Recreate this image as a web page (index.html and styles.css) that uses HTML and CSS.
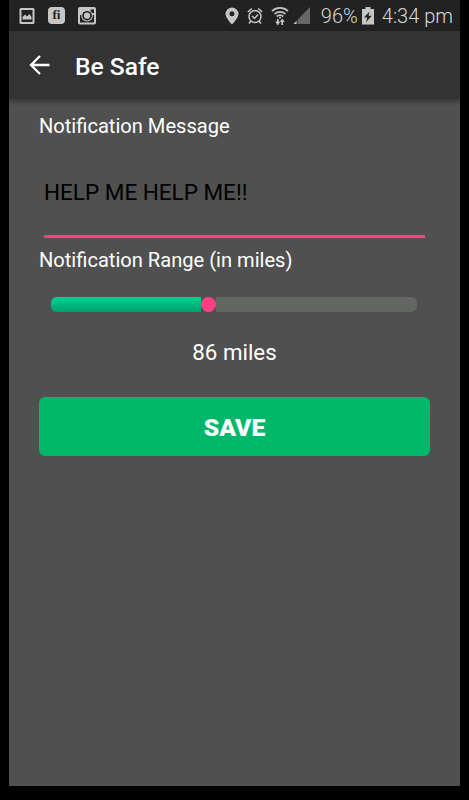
FILE: index.html
```html
<!DOCTYPE html>
<html lang="en">
<head>
    <meta charset="UTF-8">
    <meta name="viewport" content="width=device-width, initial-scale=1.0">
    <title>Be Safe</title>
    <link rel="stylesheet" href="styles.css">
</head>
<body>
    <div class="screen">
        <div class="status-bar">
            <div class="status-left">
                <svg width="16" height="18" viewBox="0 0 16 18">
                    <path fill="#c6c6c6" fill-rule="evenodd" d="M2 1h12a1.500 1.500 0 0 1 1.500 1.500v13A1.500 1.500 0 0 1 14 17H2A1.500 1.500 0 0 1 .5 15.500v-13A1.500 1.500 0 0 1 2 1zM2.500 3v12h11V3z"/>
                    <path fill="#c6c6c6" d="M3.500 12.500V10l2.500-2.500 2 2 2.500-2.500 2 3v2.500z"/>
                </svg>
                <span class="fi">fi</span>
                <svg width="18" height="18" viewBox="0 0 18 18">
                    <rect x="0" y="0" width="18" height="17.500" rx="2" fill="#c6c6c6"/>
                    <path fill="#222" d="M12.500 2.500H16V6h-3.500zM2 8h2.500v4.500h9V8H16v7.500H2z"/>
                    <circle cx="9" cy="8.700" r="5.800" fill="#c6c6c6"/>
                    <circle cx="9" cy="8.700" r="4.800" fill="#222"/>
                    <circle cx="9" cy="8.700" r="3.100" fill="#c6c6c6"/>
                </svg>
            </div>
            <div class="status-right">
                <svg class="pin" width="14" height="18" viewBox="0 0 14 18">
                    <path fill="#c6c6c6" fill-rule="evenodd" d="M7 .5a6.500 6.500 0 0 1 6.500 6.500C13.500 11 7 17.500 7 17.500S.5 11 .5 7A6.500 6.500 0 0 1 7 .5zM7 4.300a2.500 2.500 0 1 0 0 5 2.500 2.500 0 0 0 0-5z"/>
                </svg>
                <svg class="alarm" width="16" height="18" viewBox="0 0 16 18" fill="none" stroke="#c6c6c6" stroke-width="1.500">
                    <circle cx="8" cy="9.500" r="6"/>
                    <path d="M5 9l2.500 2.500L11 7.500M.8 5L4.800 1.500M15.200 5l-4-3.500M3.800 14l-1.800 2.500M12.200 14l1.800 2.500"/>
                </svg>
                <svg class="wifi" width="18" height="20" viewBox="0 0 18 20">
                    <g fill="none" stroke="#c6c6c6" stroke-width="1.700">
                        <path d="M1 5.200a11.500 11.500 0 0 1 16 0M3.500 8a8 8 0 0 1 11 0M5.800 10.500a4.800 4.800 0 0 1 6.400 0"/>
                        <path d="M6.800 13v4M11.200 19v-4"/>
                    </g>
                    <path fill="#c6c6c6" d="M4.300 15.500h5L6.800 19.500zM8.800 16h5L11.200 12.500zM9 10.500l1.200 1.200L9 13l-1.200-1.300z"/>
                </svg>
                <svg class="signal" width="17" height="18" viewBox="0 0 17 18">
                    <path fill="#666" d="M17 0v17H.5z"/>
                    <path fill="#222" d="M4.500 12v5H3.500v-4z"/>
                    <path fill="#c6c6c6" d="M3.500 14v3H.5z"/>
                </svg>
                <span class="percent">96%</span>
                <svg class="battery" width="12" height="18" viewBox="0 0 12 18">
                    <path fill="#c6c6c6" d="M3.500 0h5v2H12v15.500H0V2h3.500z"/>
                    <path fill="#222" d="M7.500 4.500L2 10.500h3.300L4 15.300l5.800-6.600H6.500z"/>
                </svg>
                <span class="time">4:34 pm</span>
            </div>
        </div>
        <header class="app-bar">
            <svg width="21" height="20" viewBox="0 0 21 20" fill="none" stroke="#fff" stroke-width="2.300">
                <path d="M20.500 10H2M11 1L2 10l9 9"/>
            </svg>
            <h1>Be Safe</h1>
        </header>
        <main class="content">
            <label class="label">Notification Message</label>
            <div class="message">HELP ME HELP ME!!</div>
            <label class="label range-label">Notification Range (in miles)</label>
            <div class="slider">
                <div class="slider-fill"></div>
                <div class="slider-gap">
                    <div class="slider-thumb"></div>
                </div>
            </div>
            <p class="miles">86 miles</p>
            <button type="button" class="save">SAVE</button>
        </main>
    </div>
</body>
</html>
```
FILE: styles.css
```css
* {
    margin: 0;
    padding: 0;
    box-sizing: border-box;
    font-family: Roboto, "Liberation Sans", sans-serif;
}
body {
    background: #000;
}
.screen {
    width: 451px;
    height: 786px;
    margin-left: 9px;
    background: #505050;
    overflow: hidden;
}
.status-bar {
    height: 31px;
    padding: 0 7px 0 10px;
    background: #222;
    color: #d8d8d8;
    display: flex;
    justify-content: space-between;
    align-items: center;
}
.status-left {
    display: flex;
    align-items: center;
    gap: 13px;
}
.fi {
    width: 17px;
    height: 17px;
    border-radius: 4px;
    background: #c6c6c6;
    color: #222;
    font-family: "Liberation Serif", serif;
    font-size: 13px;
    font-weight: bold;
    line-height: 16px;
    text-align: center;
}
.status-right {
    display: flex;
    align-items: center;
}
.alarm {
    margin-left: 8px;
}
.wifi {
    margin-left: 8px;
}
.signal {
    margin-left: 4px;
}
.percent {
    margin-left: 11px;
    font-size: 20px;
    font-weight: 300;
}
.battery {
    margin-left: 4px;
}
.time {
    margin-left: 8px;
    font-size: 20px;
    font-weight: 300;
}
.app-bar {
    height: 68px;
    padding-left: 20px;
    background: #333;
    color: #fff;
    display: flex;
    align-items: center;
    gap: 25px;
    box-shadow: 0 2px 6px rgba(0, 0, 0, 0.4);
}
.app-bar h1 {
    padding-top: 2px;
    font-size: 24.6px;
    font-weight: 500;
}
.content {
    padding: 14px 30px 0;
    color: #fff;
}
.label {
    display: block;
    font-size: 20.1px;
    line-height: 26px;
}
.message {
    height: 99px;
    margin: 0 5px;
    padding-top: 38px;
    border-bottom: 3px solid #ff4081;
    color: #000;
    font-size: 22.5px;
    line-height: 30px;
}
.range-label {
    margin-top: 9px;
}
.slider {
    display: flex;
    height: 15px;
    margin: 24px 13px 0 12px;
    border-radius: 6px;
    background: #646663;
    overflow: hidden;
}
.slider-fill {
    width: 150px;
    background: linear-gradient(#00d492, #009e6c);
}
.slider-gap {
    width: 15px;
    background: #505050;
}
.slider-thumb {
    width: 15px;
    height: 15px;
    border-radius: 50%;
    background: #ff4081;
}
.miles {
    margin-top: 25px;
    font-size: 22.3px;
    line-height: 30px;
    text-align: center;
}
.save {
    display: block;
    width: 100%;
    height: 59px;
    margin-top: 30px;
    padding-top: 2px;
    border: none;
    border-radius: 6px;
    background: #00b76a;
    color: #fff;
    font-size: 24.8px;
    font-weight: 900;
}
```
